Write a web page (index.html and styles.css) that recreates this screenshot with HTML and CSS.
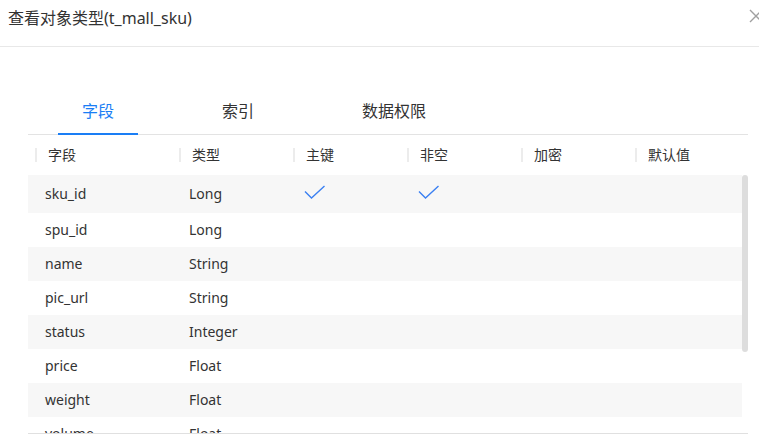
FILE: index.html
```html
<!DOCTYPE html>
<html lang="zh-CN">
<head>
<meta charset="utf-8">
<title>查看对象类型</title>
<link rel="stylesheet" href="styles.css">
</head>
<body>
<div class="dialog">
  <div class="dialog-header">
    <div class="dialog-title">查看对象类型(t_mall_sku)</div>
    <svg class="close" width="14" height="14" viewBox="0 0 14 14"><path d="M1 1 L13 13 M13 1 L1 13" stroke="#a0a0a0" stroke-width="1.4" fill="none"/></svg>
  </div>
  <div class="dialog-body">
    <div class="tabs">
      <div class="tab active">字段</div>
      <div class="tab">索引</div>
      <div class="tab">数据权限</div>
    </div>
    <div class="table">
      <div class="thead">
        <div class="th c1"><span>字段</span></div>
        <div class="th"><span>类型</span></div>
        <div class="th"><span>主键</span></div>
        <div class="th"><span>非空</span></div>
        <div class="th"><span>加密</span></div>
        <div class="th"><span>默认值</span></div>
      </div>
      <div class="tbody">
        <div class="rows">
          <div class="tr first">
            <div class="td c1">sku_id</div>
            <div class="td">Long</div>
            <div class="td"><svg class="check" width="22" height="15" viewBox="0 0 22 15"><polyline points="1,6.5 7.5,13 20.5,1" fill="none" stroke="#3b80f2" stroke-width="1.4"/></svg></div>
            <div class="td"><svg class="check" width="22" height="15" viewBox="0 0 22 15"><polyline points="1,6.5 7.5,13 20.5,1" fill="none" stroke="#3b80f2" stroke-width="1.4"/></svg></div>
            <div class="td"></div>
            <div class="td"></div>
          </div>
          <div class="tr"><div class="td c1">spu_id</div><div class="td">Long</div><div class="td"></div><div class="td"></div><div class="td"></div><div class="td"></div></div>
          <div class="tr"><div class="td c1">name</div><div class="td">String</div><div class="td"></div><div class="td"></div><div class="td"></div><div class="td"></div></div>
          <div class="tr"><div class="td c1">pic_url</div><div class="td">String</div><div class="td"></div><div class="td"></div><div class="td"></div><div class="td"></div></div>
          <div class="tr"><div class="td c1">status</div><div class="td">Integer</div><div class="td"></div><div class="td"></div><div class="td"></div><div class="td"></div></div>
          <div class="tr"><div class="td c1">price</div><div class="td">Float</div><div class="td"></div><div class="td"></div><div class="td"></div><div class="td"></div></div>
          <div class="tr"><div class="td c1">weight</div><div class="td">Float</div><div class="td"></div><div class="td"></div><div class="td"></div><div class="td"></div></div>
          <div class="tr"><div class="td c1">volume</div><div class="td">Float</div><div class="td"></div><div class="td"></div><div class="td"></div><div class="td"></div></div>
        </div>
        <div class="scrollbar"><div class="thumb"></div></div>
      </div>
    </div>
  </div>
</div>
</body>
</html>
```

FILE: styles.css
```css
* { box-sizing: border-box; }
html, body {
  margin: 0;
  padding: 0;
  background: #fff;
  overflow: hidden;
}
body {
  width: 759px;
  height: 442px;
  font-family: "Noto Sans", "Noto Sans CJK SC", sans-serif;
  color: #333;
}
.dialog-header {
  height: 47px;
  border-bottom: 1px solid #e8e8e8;
  display: flex;
  justify-content: space-between;
  align-items: flex-start;
  padding-left: 8px;
}
.dialog-title {
  font-size: 16px;
  line-height: 36px;
  color: #333;
}
.close {
  flex: none;
  margin-top: 9px;
  margin-right: -4px;
}
.dialog-body {
  margin: 0 11px 0 28px;
  padding-top: 43px;
}
.tabs {
  display: flex;
  gap: 60px;
  padding-left: 30px;
  border-bottom: 1px solid #e3e3e3;
  height: 45px;
}
.tab {
  padding: 0 24px;
  font-size: 16px;
  line-height: 42px;
  height: 45px;
  color: #333;
  border-bottom: 2px solid transparent;
}
.tab.active {
  color: #1a7ef5;
  border-bottom-color: #1a7ef5;
}
.table {
  width: 720px;
}
.thead {
  display: flex;
  height: 40px;
  align-items: center;
  padding-right: 6px;
}
.th {
  width: 114px;
  padding-left: 7px;
  font-size: 14px;
}
.th span {
  display: block;
  border-left: 2px solid #ececec;
  padding-left: 11px;
  line-height: 14px;
}
.c1 { width: 144px; }
.tbody {
  height: 259px;
  display: flex;
  overflow: hidden;
  border-bottom: 1px solid #e0e0e0;
}
.rows {
  width: 714px;
  flex: none;
}
.scrollbar {
  width: 6px;
  flex: none;
}
.thumb {
  height: 177px;
  background: #dddddd;
  border-radius: 3px;
}
.tr {
  display: flex;
  height: 34px;
  align-items: center;
  padding-bottom: 1px;
}
.tr.first { height: 38px; }
.tr:nth-child(odd) { background: #f7f7f7; }
.td {
  width: 114px;
  padding-left: 17px;
  font-size: 14px;
  color: #333;
  display: flex;
  align-items: center;
}
.td.c1 { width: 144px; }
.check {
  margin-left: 1px;
  margin-bottom: 3px;
}
```
